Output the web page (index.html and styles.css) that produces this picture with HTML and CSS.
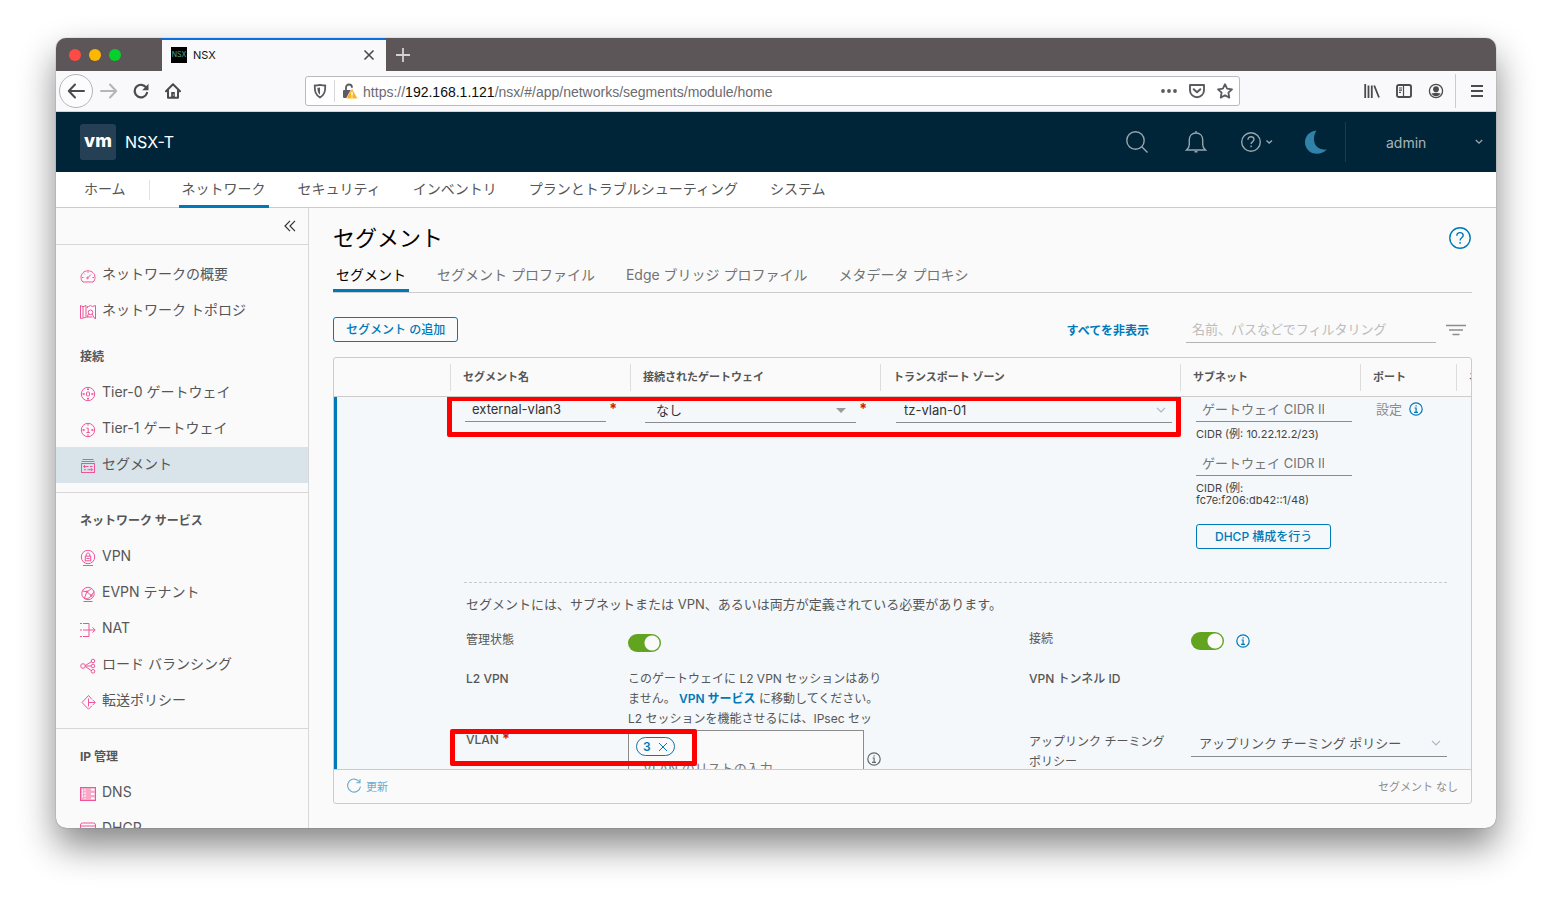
FILE: index.html
```html
<!DOCTYPE html>
<html lang="ja">
<head>
<meta charset="utf-8">
<title>NSX</title>
<link rel="stylesheet" href="styles.css">
</head>
<body>
<div class="window">
  <div class="tabstrip">
    <div class="lights"><i class="light red"></i><i class="light yellow"></i><i class="light green"></i></div>
    <div class="tab">
      <span class="favicon">NSX</span><span class="tab-title">NSX</span>
      <button class="plain" aria-label="閉じる"><svg width="12" height="12" viewBox="0 0 12 12"><path d="M1.5 1.5l9 9M10.5 1.5l-9 9" stroke="#4a4a4f" stroke-width="1.6" fill="none"/></svg></button>
    </div>
    <button class="plain new-tab" aria-label="新しいタブ"><svg width="14" height="14" viewBox="0 0 14 14"><path d="M7 0v14M0 7h14" stroke="#d3d1d2" stroke-width="1.8"/></svg></button>
  </div>

  <div class="toolbar">
    <button class="tool back" aria-label="戻る"><svg width="18" height="16" viewBox="0 0 18 16"><path d="M8 1.5L1.8 8 8 14.500M2 8h15" stroke="#4a4a4f" stroke-width="2" fill="none" stroke-linecap="round" stroke-linejoin="round"/></svg></button>
    <button class="tool" aria-label="進む"><svg width="18" height="16" viewBox="0 0 18 16"><path d="M10 1.500L16.200 8 10 14.500M16 8H1" stroke="#b5b5b8" stroke-width="2" fill="none" stroke-linecap="round" stroke-linejoin="round"/></svg></button>
    <button class="tool" aria-label="再読み込み"><svg width="16" height="16" viewBox="0 0 16 16"><path d="M13.200 4.500A6.300 6.300 0 1 0 14 10" stroke="#4a4a4f" stroke-width="2.200" fill="none" stroke-linecap="round"/><path d="M15.500.8v6.400H9.200z" fill="#4a4a4f"/></svg></button>
    <button class="tool" aria-label="ホーム"><svg width="16" height="16" viewBox="0 0 16 16"><path d="M1 8.300L8 1.300l7 7M3 7.500V14.800h10V7.500" stroke="#4a4a4f" stroke-width="2" fill="none" stroke-linecap="round" stroke-linejoin="round"/><path d="M6.200 9h3.600v5.800H6.200z" fill="#4a4a4f"/><path d="M7.800 11.500h1v1h-1z" fill="#fff"/></svg></button>
    <span class="spring"></span>
    <div class="urlbar">
      <svg class="shield" width="14" height="16" viewBox="0 0 14 16"><path d="M7 1.800c2 .5 3.800.7 5.300.7 0 6-.8 9.300-5.300 12C2.500 11.800 1.700 8.500 1.700 2.500 3.200 2.500 5 2.300 7 1.800z" fill="none" stroke="#5b5b60" stroke-width="1.800" stroke-linejoin="round"/><path d="M7 4.500c-1 .2-1.800.3-2.600.3.100 3.300.5 5.300 2.600 7z" fill="#5b5b60"/></svg>
      <i class="url-sep"></i>
      <svg width="16" height="16" viewBox="0 0 16 16"><path d="M4 8V4.800C4 2.800 5.200 1.500 7 1.500s3 1.300 3 3.200" fill="none" stroke="#5b5b60" stroke-width="1.800"/><rect x="1" y="7" width="9" height="8" rx="1" fill="#5b5b60"/><path d="M10 5.200L15.800 15.800H4.200z" fill="#ffb217" stroke="#fff" stroke-width=".6"/><path d="M10 8.800v3.600M10 13.400v1.300" stroke="#fff" stroke-width="1.400"/></svg>
      <span class="url">https://<b>192.168.1.121</b>/nsx/#/app/networks/segments/module/home</span>
      <button class="plain" aria-label="操作"><svg width="16" height="16" viewBox="0 0 16 16" fill="#5b5b60"><circle cx="2" cy="8" r="1.900"/><circle cx="8" cy="8" r="1.900"/><circle cx="14" cy="8" r="1.900"/></svg></button>
      <button class="plain" aria-label="Pocket"><svg width="16" height="16" viewBox="0 0 16 16" fill="none" stroke="#5b5b60" stroke-linecap="round" stroke-linejoin="round"><path d="M1 2h14v5.200a7 7 0 0 1-14 0z" stroke-width="1.900"/><path d="M4.700 6.200L8 9.300l3.300-3.100" stroke-width="2"/></svg></button>
      <button class="plain" aria-label="ブックマーク"><svg width="16" height="16" viewBox="0 0 16 16"><path d="M8 1.200l2.100 4.500 4.900.6-3.600 3.400.9 4.900L8 12.200l-4.300 2.400.9-4.900L1 6.300l4.900-.6z" fill="none" stroke="#5b5b60" stroke-width="1.800" stroke-linejoin="round"/></svg></button>
    </div>
    <span class="spring"></span>
    <button class="tool" aria-label="ライブラリ"><svg width="16" height="14" viewBox="0 0 16 14"><path d="M1.200 0v14M4.500 1.500V14M7.800 1.500V14M10.200 1.500L15 13.500" stroke="#4a4a4f" stroke-width="1.800"/></svg></button>
    <button class="tool" aria-label="サイドバー"><svg width="16" height="14" viewBox="0 0 16 14"><rect x="1" y="1" width="14" height="12" rx="1.800" fill="none" stroke="#4a4a4f" stroke-width="1.900"/><path d="M7.500 1v12M3 4h3M3 6.200h3M3 8.400h2" stroke="#4a4a4f" stroke-width="1.200"/></svg></button>
    <button class="tool" aria-label="アカウント"><svg width="16" height="16" viewBox="0 0 16 16"><circle cx="8" cy="8" r="6.600" fill="none" stroke="#4a4a4f" stroke-width="1.300"/><circle cx="8" cy="6.200" r="2.900" fill="#4a4a4f"/><path d="M3.400 10.300c3 0 2.600-.6 4.600-.6s1.600.6 4.600.6c-1 2-2.700 3-4.600 3s-3.600-1-4.600-3z" fill="#4a4a4f"/></svg></button>
    <i class="tool-sep"></i>
    <button class="tool" aria-label="メニュー"><svg width="12" height="12" viewBox="0 0 12 12"><path d="M0 1h12M0 6h12M0 11h12" stroke="#4a4a4f" stroke-width="1.900"/></svg></button>
  </div>

  <header class="header">
    <span class="logo">vm</span><span class="product">NSX-T</span>
    <button class="plain h-search" aria-label="検索"><svg width="24" height="24" viewBox="0 0 24 24" fill="none" stroke="#97a5ad" stroke-width="1.400"><circle cx="10.500" cy="10.500" r="8.700"/><path d="M16.800 16.800L22.500 22.500"/></svg></button>
    <button class="plain h-bell" aria-label="通知"><svg width="22" height="24" viewBox="0 0 22 24" fill="none" stroke="#97a5ad" stroke-width="1.400"><path d="M1.500 20h19c-2.200-1.800-2.800-3.300-2.800-5.500V9.800C17.700 5.800 15 3 11 3S4.300 5.800 4.300 9.800v4.700c0 2.200-.6 3.700-2.800 5.500zM11 3V1M9.500 21.800h3"/></svg></button>
    <button class="plain h-help" aria-label="ヘルプ"><svg width="32" height="22" viewBox="0 0 32 22" fill="none" stroke="#97a5ad" stroke-width="1.400"><circle cx="10" cy="11" r="9.300"/><path d="M7 8.800c0-1.900 1.200-3 3-3s3 1.100 3 2.700c0 2.100-2.900 2.200-2.900 4.600M10.100 14.600v1.600M25.500 9.500l2.700 2.600L31 9.500"/></svg></button>
    <button class="plain h-moon" aria-label="ダークモード"><svg width="24" height="24" viewBox="0 0 24 24"><path d="M12.500.5C5.500 1.200 1 6.200 1 12.300 1 19 6.300 23.800 12.800 23.800c4.200 0 7.700-1.700 10-4.300-8.300 1-12.800-4-12.800-10.200 0-3.600.8-6.400 2.500-8.800z" fill="#3082a8"/></svg></button>
    <button class="user">admin<svg width="8" height="6" viewBox="0 0 8 6"><path d="M.8 1L4 4.200 7.200 1" fill="none" stroke="#97a5ad" stroke-width="1.300"/></svg></button>
  </header>

  <nav class="mainnav">
    <a href="#">ホーム</a><i></i><a href="#" class="on">ネットワーク</a><a href="#">セキュリティ</a><a href="#">インベントリ</a><a href="#">プランとトラブルシューティング</a><a href="#">システム</a>
  </nav>

  <div class="content">
    <aside class="sidebar">
      <div class="collapse"><button class="plain" aria-label="折りたたむ"><svg width="12" height="12" viewBox="0 0 12 12"><path d="M6 .8L1 6l5 5.200M11 .8L6 6l5 5.200" stroke="#333" stroke-width="1.200" fill="none"/></svg></button></div>
      <div class="group">
        <a href="#"><svg viewBox="0 0 16 16"><path d="M3 14C1.500 12.800 1 11 1 9.500 1 5.500 4 2.800 8 2.800s7 2.700 7 6.700c0 1.500-.5 3.300-2 4.500z"/><path d="M7.500 10L11 6.500M2 9.500h1.500M12.500 9.500H14M8 3.500v1.300M4 5.500l.8.800"/><circle cx="7.500" cy="10" r=".8"/></svg>ネットワークの概要</a>
        <a href="#"><svg viewBox="0 0 16 16"><path d="M5.500 13.500l-5 1V1.500l2.500 1.200 3-1.200v12zM3 2.700v11M7.500 4V2.500h1L10.500 1.500l2 1 3-1v13.500M7 13.500l1-1"/><circle cx="10.500" cy="8.300" r="2.300"/><path d="M8.500 10l-1.500 3h5.500M12 10l3 4.800"/></svg>ネットワーク トポロジ</a>
      </div>
      <div class="group first">
        <h2>接続</h2>
        <a href="#"><svg viewBox="0 0 16 16"><circle cx="8" cy="8" r="6.700"/><rect x="6.500" y="6" width="3" height="4" rx="1"/><path d="M8 2v2.200M8 11.800V14M2.300 8h2.400M11.300 8h2.400M3.800 7v2M12.200 7v2M7 3.500h2M7 12.500h2"/></svg>Tier-0 ゲートウェイ</a>
        <a href="#"><svg viewBox="0 0 16 16"><circle cx="8" cy="8" r="6.700"/><path d="M6.500 6.200h1.700v4.300M6.500 10.500h3.300M8 2v1.700M8 12.300V14M2.300 8h2.400M11.300 8h2.400M3.800 7v2M12.200 7v2"/></svg>Tier-1 ゲートウェイ</a>
        <a href="#" class="active"><svg viewBox="0 0 16 16"><path d="M2.500 1.500h11M1.500 3.500h13"/><rect x="1.500" y="5.500" width="13" height="9"/><path d="M3.500 8.500h5M10 8.500h2.500M5 7L3.500 8.500 5 10M4 11.700h2M7.500 11.700h5M11 10.200l1.500 1.500-1.500 1.500"/></svg>セグメント</a>
      </div>
      <div class="group ruled">
        <h2>ネットワーク サービス</h2>
        <a href="#"><svg viewBox="0 0 16 16"><circle cx="8" cy="7" r="6.700"/><rect x="5.300" y="6.200" width="5.400" height="4.600"/><path d="M6.300 6V4.800c0-2.300 3.400-2.300 3.400 0V6M3 15.500h10M6.500 8.500h3"/></svg>VPN</a>
        <a href="#"><svg viewBox="0 0 16 16"><circle cx="8" cy="7.500" r="6.200"/><path d="M3.500 15.500h9M2.500 5L7 5.800 11.500 2.500M6.500 6.500L4.500 12M4.500 12c2.500 1 5 .5 7-2.500M11.500 9.500l2.500-4M7.500 6.300l3.500 3"/><circle cx="7" cy="5.800" r=".9"/><circle cx="11.300" cy="9.600" r=".9"/></svg>EVPN テナント</a>
        <a href="#"><svg viewBox="0 0 16 16"><path d="M0 1.500h2M3 1.500h6v13H3M0 14.500h2M0 8h2M3 8h12M12.500 5.500L15.200 8l-2.700 2.500"/></svg>NAT</a>
        <a href="#"><svg viewBox="0 0 16 16"><circle cx="3" cy="8" r="2.300"/><circle cx="13" cy="3" r="1.800"/><circle cx="13" cy="8" r="1.800"/><circle cx="13" cy="13.300" r="1.800"/><path d="M5.300 8h5.700M5.300 7.500L11.300 3.800M5.300 8.500l6 4"/></svg>ロード バランシング</a>
        <a href="#"><svg viewBox="0 0 16 16"><path d="M12 5.500L8.500 1.500 2 8.500l6.500 6.700 3.500-3.500M8.500 4.500v8M8.500 8.500H15M12.800 6l2.500 2.500-2.500 2.500"/></svg>転送ポリシー</a>
      </div>
      <div class="group ruled">
        <h2>IP 管理</h2>
        <a href="#"><svg viewBox="0 0 16 16"><rect x=".5" y="1.500" width="15" height="13" fill="#f9a8c8"/><path d="M2.500 3.500v9M5 3v10" stroke="#fff" stroke-dasharray="2 1"/><path d="M11 3.600h3.500M11 8h3.500M11 12.400h3.500" stroke="#fff" stroke-width="1.800"/></svg>DNS</a>
        <a href="#"><svg viewBox="0 0 16 16"><rect x=".5" y="1" width="15" height="14" rx="2"/><path d="M.5 4h15M3 7h10M10 10h3"/></svg>DHCP</a>
      </div>
    </aside>

    <main class="main">
      <div class="titlebar"><h1>セグメント</h1><button class="plain" aria-label="ヘルプ"><svg width="24" height="24" viewBox="0 0 24 24" fill="none" stroke="#0079b8" stroke-width="1.400"><circle cx="12" cy="12" r="10.200"/><path d="M8.800 9.800c0-2 1.300-3.200 3.200-3.200s3.200 1.200 3.200 2.900c0 2.300-3.100 2.400-3.100 5M12.100 16v1.800"/></svg></button></div>
      <div class="tabs"><a href="#" class="on">セグメント</a><a href="#">セグメント プロファイル</a><a href="#">Edge ブリッジ プロファイル</a><a href="#">メタデータ プロキシ</a></div>
      <div class="actions">
        <button class="btn">セグメント の追加</button>
        <button class="link">すべてを非表示</button>
        <input class="filter" type="text" aria-label="フィルタ" placeholder="名前、パスなどでフィルタリング">
        <button class="plain filter-icon" aria-label="フィルタ条件"><svg width="22" height="12" viewBox="0 0 22 12"><path d="M1 1.500h20M4 6h14M7.500 10.500h7" stroke="#8c8c8c" stroke-width="1.700"/></svg></button>
      </div>

      <section class="grid">
        <div class="cols head">
          <span></span><span>セグメント名</span><span>接続されたゲートウェイ</span><span>トランスポート ゾーン</span><span>サブネット</span><span>ポート</span><span class="cut">ネ</span>
        </div>
        <div class="body">
          <div class="cols row">
            <div class="c-name"><input class="field" type="text" aria-label="セグメント名" value="external-vlan3"><b class="req">*</b></div>
            <div class="c-gw"><div class="pick"><select aria-label="接続されたゲートウェイ"><option>なし</option></select><svg width="10" height="5" viewBox="0 0 10 5"><path d="M0 0h10L5 5z" fill="#9a9a9a"/></svg></div><b class="req">*</b></div>
            <div class="c-tz"><div class="pick"><select aria-label="トランスポート ゾーン"><option>tz-vlan-01</option></select><svg width="10" height="6" viewBox="0 0 10 6"><path d="M1 .8L5 5 9 .8" fill="none" stroke="#a9b8c0" stroke-width="1.200"/></svg></div></div>
            <div class="c-subnet">
              <input class="field cidr" id="cidr4" type="text" placeholder="ゲートウェイ CIDR IPv4"><label for="cidr4">CIDR (例: 10.22.12.2/23)</label>
              <input class="field cidr" id="cidr6" type="text" placeholder="ゲートウェイ CIDR IPv6"><label for="cidr6">CIDR (例:<br>fc7e:f206:db42::1/48)</label>
              <button class="btn">DHCP 構成を行う</button>
            </div>
            <div class="c-port">設定 <svg class="info" width="14" height="14" viewBox="0 0 14 14"><circle cx="7" cy="7" r="6.200"/><path d="M5.600 6h1.500v4M5 10.300h4M6.500 3.800h1.200"/></svg></div>
            <div class="mark mark-row"></div>
          </div>
          <div class="details">
            <p class="note">セグメントには、サブネットまたは VPN、あるいは両方が定義されている必要があります。</p>
            <div class="form">
              <label for="admin-state">管理状態</label>
              <div class="val"><input class="toggle low" id="admin-state" type="checkbox" checked></div>
              <label class="up" for="conn">接続</label>
              <div class="val"><input class="toggle" id="conn" type="checkbox" checked><svg class="info" width="14" height="14" viewBox="0 0 14 14"><circle cx="7" cy="7" r="6.200"/><path d="M5.600 6h1.500v4M5 10.300h4M6.500 3.800h1.200"/></svg></div>
              <span class="lab">L2 VPN</span>
              <div class="l2">このゲートウェイに L2 VPN セッションはあり<br>ません。 <a href="#">VPN サービス</a> に移動してください。<br>L2 セッションを機能させるには、IPsec セッ</div>
              <span class="lab">VPN トンネル ID</span><span></span>
              <label class="vlan" for="vlan">VLAN <b class="req">*</b></label>
              <div class="vlan-val"><div class="tags"><span class="chip">3<button class="plain" aria-label="削除"><svg width="10" height="10" viewBox="0 0 10 10"><path d="M1 1l8 8M9 1L1 9" stroke="#0079b8" fill="none"/></svg></button></span><input id="vlan" type="text" placeholder="VLAN のリストの入力"></div><svg class="info gray" width="14" height="14" viewBox="0 0 14 14"><circle cx="7" cy="7" r="6.200"/><path d="M5.600 6h1.500v4M5 10.300h4M6.500 3.800h1.200"/></svg></div>
              <label class="uplink" for="uplink">アップリンク チーミング<br>ポリシー</label>
              <div class="pick uplink-pick"><select id="uplink"><option>アップリンク チーミング ポリシー</option></select><svg width="10" height="6" viewBox="0 0 10 6"><path d="M1 .8L5 5 9 .8" fill="none" stroke="#a9b8c0" stroke-width="1.200"/></svg></div>
              <div class="mark mark-vlan"></div>
            </div>
          </div>
        </div>
        <footer class="foot"><button class="refresh"><svg width="16" height="16" viewBox="0 0 16 16"><path d="M13.500 4A6.500 6.500 0 1 0 14.500 8.500M14 1v3.700h-3.700" fill="none" stroke="#6cabd0" stroke-width="1.100"/></svg>更新</button><span>セグメント なし</span></footer>
      </section>
    </main>
  </div>
</div>
</body>
</html>
```
FILE: styles.css
```css
* { box-sizing: border-box; }
body {
  margin: 0; height: 100vh; padding: 38px 56px 74px; background: #fff; overflow: hidden;
  font-family: Inter, "Noto Sans CJK JP", sans-serif; font-size: 14px; color: #565656;
}
button, input, select { font: inherit; color: inherit; }
a { color: inherit; text-decoration: none; }
svg { display: block; flex: none; }
h1, h2, p { margin: 0; }
.plain { border: 0; background: none; padding: 0; display: flex; align-items: center; }

.window {
  height: 100%; display: flex; flex-direction: column; overflow: hidden; border-radius: 10px;
  background: #fafafa; box-shadow: 0 0 1px rgba(0,0,0,.6), 0 18px 36px rgba(0,0,0,.48);
}

.tabstrip { height: 33px; flex: none; display: flex; background: #5c5658; }
.lights { width: 106px; display: flex; gap: 8px; padding-left: 13px; align-items: center; }
.light { width: 12px; height: 12px; border-radius: 50%; }
.red { background: #ff4b45; }
.yellow { background: #fdb700; }
.green { background: #06d02c; }
.tab {
  width: 224px; display: flex; align-items: center; padding: 0 11px 2px 9px;
  background: #f9f9fb; border-top: 2px solid #0a6ee0; color: #111; font-size: 11px;
}
.favicon { width: 16px; height: 16px; background: #000; color: #4fa79c; font-size: 7px; line-height: 16px; text-align: center; }
.tab-title { flex: 1; padding-left: 6px; }
.new-tab { padding-left: 10px; }

.toolbar { height: 41px; flex: none; display: flex; align-items: center; padding: 0 3px; background: #f9f9fb; border-bottom: 1px solid #d4d4d8; }
.tool { width: 32px; height: 32px; border: 0; padding: 0; background: none; display: flex; align-items: center; justify-content: center; }
.back { width: 34px; height: 34px; border: 1px solid #b5b5b8; border-radius: 50%; background: #fcfcfd; }
.spring { flex: 118; }
.tool-sep { width: 1px; height: 34px; margin: 0 5px 0 3px; background: #ccccd0; }
.urlbar {
  flex: 935; height: 30px; display: flex; align-items: center; padding: 0 6px 0 7px;
  background: #fff; border: 1px solid #b9b9be; border-radius: 3px; gap: 12px;
}
.url-sep { width: 1px; height: 22px; background: #d7d7db; margin: 0 -5px; }
.url { flex: 1; margin-left: -7px; padding-top: 1px; font-family: "Liberation Sans", sans-serif; font-size: 14px; color: #6b6b70; }
.url b { font-weight: 400; color: #0c0c0d; }

.header { height: 60px; flex: none; display: flex; align-items: center; padding-left: 24px; background: #002538; color: #fff; }
.logo {
  width: 36px; height: 36px; border-radius: 3px; background: #254054; text-align: center;
  font-size: 18px; line-height: 34px; font-weight: 800;
}
.product { flex: 1; padding-left: 9px; font-size: 16px; }
.h-bell { margin-left: 36px; }
.h-help { margin-left: 34px; }
.h-moon { margin-left: 31px; }
.user {
  width: 151px; height: 40px; margin-left: 17px; padding: 0 13px 0 40px; background: none;
  border: 0; border-left: 1px solid #1b3c4e; display: flex; align-items: center; justify-content: space-between; color: #aab4ba;
}

.mainnav { height: 36px; flex: none; display: flex; padding-left: 25px; background: #fff; border-bottom: 1px solid #ccc; }
.mainnav a { line-height: 34px; padding: 0 3px; margin-right: 26px; white-space: nowrap; }
.mainnav i { width: 1px; height: 20px; margin: 8px 29px 0 -6px; background: #e3e3e3; }
.mainnav a.on { border-bottom: 3px solid #0079b8; height: 36px; }

.content { flex: 1; min-height: 0; display: flex; }
.sidebar { width: 253px; flex: none; overflow: hidden; border-right: 1px solid #d7d7d7; }
.collapse { height: 37px; display: flex; justify-content: flex-end; padding-right: 12px; margin-bottom: 12px; border-bottom: 1px solid #d7d7d7; }
.group a { height: 36px; padding: 0 24px 4px; display: flex; align-items: center; gap: 6px; }
.group svg { width: 16px; height: 16px; margin-top: 5px; fill: none; stroke: #f0559a; stroke-width: 1; }
.group h2 { height: 36px; padding-left: 24px; font-size: 12px; line-height: 36px; font-weight: 700; }
.group.first { padding-top: 10px; }
.group.ruled { margin-top: 9px; padding-top: 10px; border-top: 1px solid #d7d7d7; }
.group a.active { background: #d9e4ea; }

.main { flex: 1; min-width: 0; padding: 12px 24px 24px; display: flex; flex-direction: column; }
.titlebar { height: 36px; flex: none; display: flex; align-items: center; justify-content: space-between; }
h1 { font-size: 22px; line-height: 36px; font-weight: 400; color: #000; }
.tabs { height: 37px; flex: none; display: flex; gap: 25px; border-bottom: 1px solid #ccc; }
.tabs a { padding: 0 3px; line-height: 37px; color: #737373; white-space: nowrap; }
.tabs a.on { color: #000; border-bottom: 3px solid #0079b8; }
.actions { height: 25px; flex: none; margin: 24px 0 15px; display: flex; align-items: center; }
.btn {
  height: 25px; padding: 0 12px; border: 1px solid #0079b8; border-radius: 3px; background: none;
  color: #0079b8; font-size: 12px; font-weight: 500; line-height: 16px; white-space: nowrap;
}
.link { margin-left: auto; border: 0; padding: 0; background: none; color: #0079b8; font-size: 12px; font-weight: 600; }
.filter { width: 250px; height: 26px; margin-left: 37px; padding: 0 6px; border: 0; border-bottom: 1px solid #b3b3b3; background: none; font-size: 13px; }
.filter::placeholder { color: #bcbcbc; }
.filter-icon { margin: 0 5px 0 9px; }

.grid { flex: 1; min-height: 0; display: flex; flex-direction: column; border: 1px solid #ccc; border-radius: 3px; }
.cols {
  display: grid;
  grid-template-columns: 116px minmax(0, 18fr) minmax(0, 25fr) minmax(0, 30fr) minmax(0, 18fr) 96px 15px;
}
.head { height: 39px; flex: none; align-items: center; border-bottom: 1px solid #ccc; font-size: 11px; font-weight: 700; }
.head span { height: 27px; line-height: 27px; padding-left: 12px; border-left: 1px solid #ddd; white-space: nowrap; overflow: hidden; }
.head span:first-child { border: 0; }
.body { flex: 1; min-height: 0; overflow: hidden; background: #f4f8fb; box-shadow: inset 3px 0 #0079b8; }
.row { position: relative; font-size: 13px; }
.c-name, .c-gw, .c-tz { display: flex; align-items: flex-start; padding-left: 15px; }
.c-name { grid-column: 2; padding-right: 13px; gap: 3px; }
.c-gw { padding-right: 13px; gap: 3px; }
.c-tz { padding: 0 8px 0 16px; }
.field { height: 25px; min-width: 0; border: 0; border-bottom: 1px solid #8c8c8c; border-radius: 0; background: none; padding: 0 7px; color: #333; outline: 0; }
.c-name .field { flex: 1; }
.req { color: #c92100; font-size: 14px; line-height: 24px; }
.vlan .req { line-height: 18px; }
.pick { position: relative; flex: 1; height: 26px; border-bottom: 1px solid #8c8c8c; }
.pick select { width: 100%; height: 25px; padding: 0 8px; border: 0; background: none; appearance: none; color: #333; outline: 0; }
.c-gw .pick select { padding-left: 11px; }
.pick svg { position: absolute; right: 6px; top: 10px; pointer-events: none; }
.c-gw .pick svg { right: 10px; top: 11px; }
.c-subnet { padding: 0 8px 0 16px; display: flex; flex-direction: column; align-items: flex-start; color: #454545; }
.cidr { width: 100%; padding: 0 28px 0 6px; }
.cidr::placeholder { color: #757575; }
.c-subnet label { font-size: 11px; line-height: 12px; padding: 6px 0 12px; }
.c-subnet label + .field { margin-top: -1px; }
.c-subnet .btn { margin-top: 6px; padding: 0 18px; }
.c-port { height: 24px; padding-left: 16px; display: flex; align-items: center; gap: 7px; color: #8c8c8c; line-height: 16px; }
.info { fill: none; stroke: #0079b8; stroke-width: 1.2; }
.info.gray { stroke: #666; }

.details { margin: 33px 24px 0 130px; border-top: 1px dashed #c8ccd0; font-size: 12px; line-height: 20px; }
.note { padding: 11px 0 16px 2px; font-size: 13px; }
.form {
  position: relative; display: grid; padding-left: 2px; white-space: nowrap;
  grid-template-columns: minmax(0, 162fr) minmax(0, 401fr) minmax(0, 162fr) minmax(0, 256fr);
  grid-template-rows: 38px 62px auto;
}
.up { margin-top: -1px; }
.lab, .vlan { font-weight: 500; }
.val { display: flex; align-items: flex-start; gap: 12px; padding-top: 2px; }
.val .info { margin-top: 2px; }
.toggle { appearance: none; width: 33px; height: 18px; margin: 0; border-radius: 9px; background: radial-gradient(circle at 24px 9px, #fafafa 7px, #62a420 8px); }
.toggle.low { margin-top: 2px; }
.l2 { height: 62px; padding-top: 1px; overflow: hidden; }
.l2 a { color: #0079b8; font-weight: 600; }
.lab { padding-top: 1px; }
.vlan-val { display: flex; gap: 3px; align-items: flex-start; }
.tags { width: 236px; height: 70px; padding: 6px 7px; border: 1px solid #8c8c8c; background: #fafafa; }
.chip { width: 39px; height: 19px; padding: 0 6px; display: flex; align-items: center; justify-content: space-between; border: 1px solid #0079b8; border-radius: 10px; color: #0079b8; font-weight: 600; }
.tags input { width: 200px; height: 24px; padding: 0 7px; border: 0; background: none; font-size: 13px; outline: 0; }
.vlan-val .info { margin-top: 22px; }
.uplink { padding-top: 2px; }
.uplink-pick { height: 27px; font-size: 13px; }
.uplink-pick select { color: #565656; }
.mark { position: absolute; z-index: 2; border: 5px solid #f00; border-radius: 2px; pointer-events: none; }
.mark-row { grid-column: 2 / 5; left: -3px; right: -1px; top: -1px; height: 41px; }
.mark-vlan { grid-column: 1 / 2; grid-row: 3; left: -16px; right: -69px; top: -1px; height: 37px; }

.foot { height: 34px; flex: none; display: flex; align-items: center; justify-content: space-between; padding: 0 13px 2px 12px; border-top: 1px solid #ccc; font-size: 11px; color: #8c8c8c; }
.refresh { display: flex; align-items: center; gap: 4px; border: 0; padding: 0; background: none; color: #6cabd0; }
```
